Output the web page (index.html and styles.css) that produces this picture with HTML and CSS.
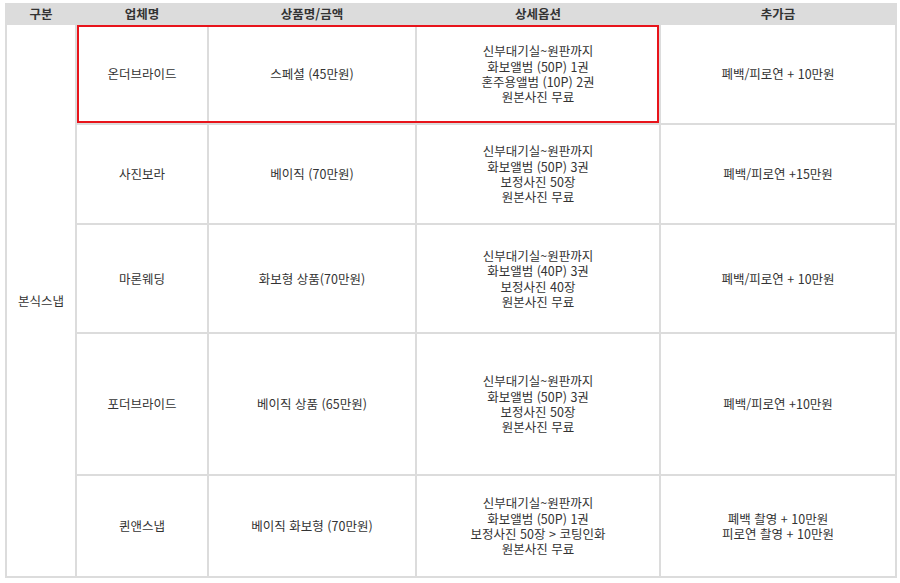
FILE: index.html
```html
<!DOCTYPE html>
<html lang="ko">
<head>
<meta charset="utf-8">
<title>본식스냅</title>
<link rel="stylesheet" href="styles.css">
</head>
<body>
<div class="table">
  <div class="th">구분</div>
  <div class="th">업체명</div>
  <div class="th">상품명/금액</div>
  <div class="th">상세옵션</div>
  <div class="th">추가금</div>

  <div class="td cat">본식스냅</div>

  <div class="td r1 c2">온더브라이드</div>
  <div class="td r1 c3">스페셜 (45만원)</div>
  <div class="td r1 c4">신부대기실~원판까지<br>화보앨범 (50P) 1권<br>혼주용앨범 (10P) 2권<br>원본사진 무료</div>
  <div class="td r1 c5">폐백/피로연 + 10만원</div>

  <div class="td r2 c2">사진보라</div>
  <div class="td r2 c3">베이직 (70만원)</div>
  <div class="td r2 c4">신부대기실~원판까지<br>화보앨범 (50P) 3권<br>보정사진 50장<br>원본사진 무료</div>
  <div class="td r2 c5">폐백/피로연 +15만원</div>

  <div class="td r3 c2">마론웨딩</div>
  <div class="td r3 c3">화보형 상품(70만원)</div>
  <div class="td r3 c4">신부대기실~원판까지<br>화보앨범 (40P) 3권<br>보정사진 40장<br>원본사진 무료</div>
  <div class="td r3 c5">폐백/피로연 + 10만원</div>

  <div class="td r4 c2">포더브라이드</div>
  <div class="td r4 c3">베이직 상품 (65만원)</div>
  <div class="td r4 c4">신부대기실~원판까지<br>화보앨범 (50P) 3권<br>보정사진 50장<br>원본사진 무료</div>
  <div class="td r4 c5">폐백/피로연 +10만원</div>

  <div class="td r5 c2">퀸앤스냅</div>
  <div class="td r5 c3">베이직 화보형 (70만원)</div>
  <div class="td r5 c4">신부대기실~원판까지<br>화보앨범 (50P) 1권<br>보정사진 50장 &gt; 코팅인화<br>원본사진 무료</div>
  <div class="td r5 c5">폐백 촬영 + 10만원<br>피로연 촬영 + 10만원</div>

  <div class="highlight"></div>
</div>
</body>
</html>
```

FILE: styles.css
```css
html, body {
  margin: 0;
  padding: 0;
  background: #ffffff;
}

body {
  font-family: "Noto Sans CJK KR", "Malgun Gothic", "Noto Sans", sans-serif;
  color: #333333;
  font-size: 12.5px;
}

.table {
  display: grid;
  grid-template-columns: 68px 130px 206px 242px 234px;
  grid-template-rows: 18px 98px 98px 107px 140px 100px;
  gap: 2px;
  padding: 2px;
  width: 888px;
  margin: 3px 0 0 5px;
  background: #dcdcdc;
}

.th {
  grid-row: 1;
  background: #dcdcdc;
  font-weight: bold;
  font-size: 12.5px;
  display: flex;
  align-items: center;
  justify-content: center;
  color: #333333;
  line-height: 1;
}

.td {
  background: #ffffff;
  display: flex;
  align-items: center;
  justify-content: center;
  text-align: center;
  line-height: 15.3px;
}

.r1 { grid-row: 2; }
.r2 { grid-row: 3; }
.r3 { grid-row: 4; }
.r4 { grid-row: 5; }
.r5 { grid-row: 6; }

.c2 { grid-column: 2; }
.c3 { grid-column: 3; }
.c4 { grid-column: 4; }
.c5 { grid-column: 5; }

.cat {
  grid-column: 1;
  grid-row: 2 / span 5;
}

.highlight {
  grid-column: 2 / span 3;
  grid-row: 2;
  border: 2px solid #e8141b;
  pointer-events: none;
  z-index: 1;
}
```
